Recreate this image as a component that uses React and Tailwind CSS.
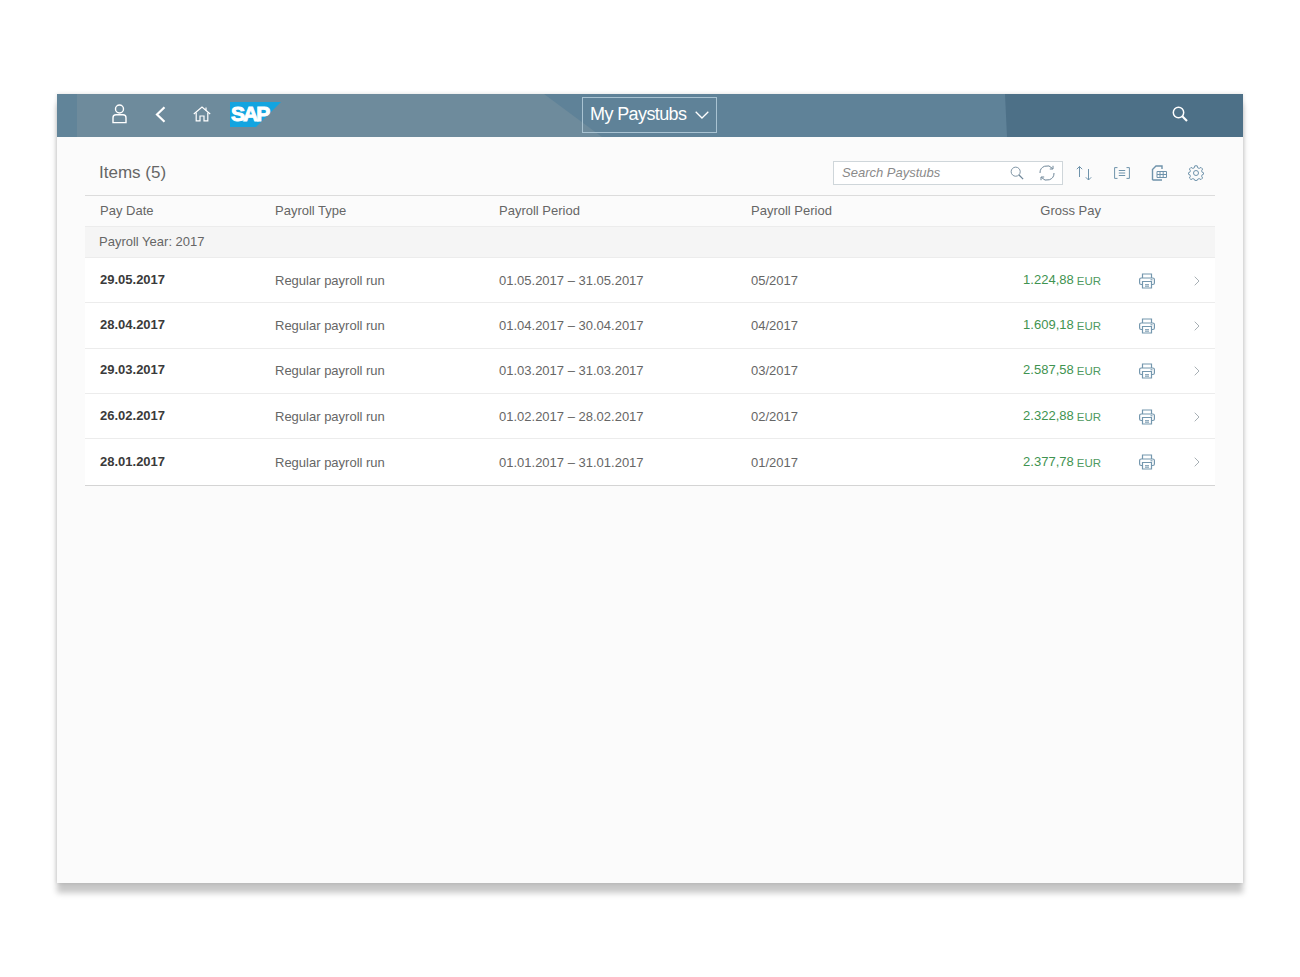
const rows = [
  ["29.05.2017", "01.05.2017 – 31.05.2017", "05/2017", "1.224,88"],
  ["28.04.2017", "01.04.2017 – 30.04.2017", "04/2017", "1.609,18"],
  ["29.03.2017", "01.03.2017 – 31.03.2017", "03/2017", "2.587,58"],
  ["26.02.2017", "01.02.2017 – 28.02.2017", "02/2017", "2.322,88"],
  ["28.01.2017", "01.01.2017 – 31.01.2017", "01/2017", "2.377,78"],
];

const gridCols = "grid grid-cols-[175px_224px_252px_150px_200px_92px_22px] pl-[15px] items-center";

function Svg({ w, h, children, className = "" }) {
  return (
    <svg width={w} height={h} viewBox={`0 0 ${w} ${h}`} fill="none" stroke="currentColor" className={className}>
      {children}
    </svg>
  );
}

function Printer() {
  return (
    <Svg w={16} h={16} className="text-[#7497ae]">
      <path d="M3.5 5V1H12.5V5" strokeWidth="1.2" />
      <path d="M3.5 11.5H2.2C1.2 11.5 .6 10.8 .6 10V6.6C.6 5.7 1.2 5 2.2 5H13.8C14.8 5 15.4 5.7 15.4 6.6V10C15.4 10.8 14.8 11.5 13.8 11.5H12.5" strokeWidth="1.2" />
      <path d="M3.5 8.5H12.5V15H3.5Z" strokeWidth="1.2" />
      <path d="M6 11.7H10M6 13.2H10" strokeWidth="1" />
      <path d="M11.5 6.8H13.5" strokeWidth="1.1" />
    </Svg>
  );
}

function Search({ className, s = 16, sw = 1.2 }) {
  return (
    <svg width={s} height={s} viewBox="0 0 16 16" fill="none" stroke="currentColor" strokeWidth={sw} className={className}>
      <circle cx="6.5" cy="6.5" r="5.2" />
      <path d="M10.3 10.3L15 15" strokeWidth={sw * 1.4} />
    </svg>
  );
}

function Row({ r, last }) {
  return (
    <div className={`${gridCols} ${last ? "h-[46.5px] border-[#d4d4d4]" : "h-[45.3px] border-[#ececec]"} pt-px bg-white border-b`}>
      <div className="font-bold text-[#3a3a3a] -translate-y-px">{r[0]}</div>
      <div>Regular payroll run</div>
      <div>{r[1]}</div>
      <div>{r[2]}</div>
      <div className="flex justify-end items-baseline text-[#3f9350]">
        <span className="-translate-y-px">{r[3]}</span>
        <span className="ml-[3px] text-[11.5px] text-[#4f9a62]">EUR</span>
      </div>
      <div className="flex justify-center"><Printer /></div>
      <div className="text-[#a8b0b5] pl-px">
        <Svg w={6} h={10}><path d="M.7 .7L5 5L.7 9.3" strokeWidth="1" /></Svg>
      </div>
    </div>
  );
}

export default function App() {
  return (
    <div className="min-h-[977px] bg-white pt-[94px] pl-[57px] font-['Liberation_Sans',Arial,sans-serif] text-[13px] text-[#666666]">
      <div className="w-[1186px] h-[789px] bg-[#fbfbfb] shadow-[0_10px_6px_0_rgba(0,0,0,0.22),0_0_4px_rgba(0,0,0,0.14)] flex flex-col">
        <header className="relative h-[43px] shrink-0 bg-[#5f8298] text-white overflow-hidden">
          <svg className="absolute inset-0" width="1186" height="43" viewBox="0 0 1186 43">
            <rect x="0" y="0" width="1186" height="43" fill="#5f8298" />
            <polygon points="20,0 487,0 545,43 20,43" fill="#6e8b9c" />
            <polygon points="0,0 20,0 20,43 0,43" fill="#618499" />
            <polygon points="948,0 1186,0 1186,43 950,43" fill="#4d7087" />
          </svg>
          <div className="relative flex items-center pl-[55px] w-full h-[40px]">
            <svg width="15" height="20" viewBox="0 0 15 20" fill="none" stroke="currentColor" strokeWidth="1.4">
              <circle cx="7.5" cy="5" r="4" />
              <path d="M1 18.6V13.8C1 12 2.3 10.8 4 10.8H11C12.7 10.8 14 12 14 13.8V18.6Z" />
            </svg>
            <svg className="ml-[28px]" width="11" height="17" viewBox="0 0 11 17" fill="none" stroke="currentColor" strokeWidth="2.2">
              <path d="M9.5 1.2L2 8.5L9.5 15.8" />
            </svg>
            <svg className="ml-[27px]" width="18" height="16" viewBox="0 0 18 16" fill="none" stroke="currentColor" strokeWidth="1.2">
              <path d="M.8 8L9 1L17.2 8" />
              <path d="M3.2 6.5V14.8H7V10H11V14.8H14.8V6.5" />
              <path d="M13 1.6V4.4" />
            </svg>
            <svg className="ml-[19px]" width="52" height="27" viewBox="0 0 52 27">
              <polygon points="0,1 51,1 26,26 0,26" fill="#13a4e0" />
              <text x="1" y="20" fill="#ffffff" fontSize="21" fontWeight="700" stroke="#ffffff" strokeWidth="1" letterSpacing="-2" fontFamily="Liberation Sans, Arial, sans-serif">SAP</text>
            </svg>
            <button className="ml-[300px] mt-[2px] pb-[2px] w-[135px] h-[36px] border border-[#a9c3d2] flex items-center pl-[7px] text-[18px] tracking-[-0.6px] text-white">
              My Paystubs
              <svg className="ml-[9px] mt-[2px]" width="14" height="8" viewBox="0 0 14 8" fill="none" stroke="currentColor" strokeWidth="1.3">
                <path d="M.7 .7L7 7L13.3 .7" />
              </svg>
            </button>
            <Search className="ml-[455px]" sw={1.5} />
          </div>
        </header>

        <div className="mx-[28px] flex flex-col">
          <div className="h-[59px] pt-[14px] flex items-center border-b border-[#dcdcdc] pl-[14px]">
            <div className="text-[17px] text-[#666666]">Items (5)</div>
            <div className="ml-auto flex items-center text-[#6f93ab]">
              <div className="w-[230px] h-[24px] bg-white border border-[#cfd6da] flex items-center pl-[8px] text-[#8a8a8a] text-[13px] italic">
                <span>Search Paystubs</span>
                <Search className="ml-auto text-[#6e8698] -translate-x-px" s={14} sw={1} />
                <svg className="ml-[14px] mr-[7px]" width="16" height="16" viewBox="0 0 16 16" fill="none" stroke="#6e8698" strokeWidth="1">
                  <path d="M1 8A7 7 0 0 1 13.5 3.5M15 8A7 7 0 0 1 2.5 12.5" />
                  <path d="M14 .8V4H10.8M2 15.2V12H5.2" />
                </svg>
              </div>
              <svg className="ml-[13px]" width="16" height="16" viewBox="0 0 16 16" fill="none" stroke="currentColor" strokeWidth="1">
                <path d="M3.5 12V1.5M.8 4.2L3.5 1.5L6.2 4.2" />
                <path d="M12.5 4V15M9.8 12.3L12.5 15L15.2 12.3" />
              </svg>
              <svg className="ml-[22px]" width="16" height="12" viewBox="0 0 16 12" fill="none" stroke="currentColor" strokeWidth="1">
                <path d="M3.5 .6H.6V11.4H3.5M12.5 .6H15.4V11.4H12.5" />
                <path d="M4.8 3.5H11.2M4.8 6H11.2M4.8 8.5H11.2" />
              </svg>
              <svg className="ml-[21px]" width="16" height="16" viewBox="0 0 16 16" fill="none" stroke="currentColor" strokeWidth="1">
                <path d="M1.5 15V4.5L5 1H11V4M1.5 15H11" strokeWidth="1.4" />
                <path d="M6 6.5H15.5V12.5H6ZM6 9.5H15.5M9 6.5V12.5M12.2 6.5V12.5" />
              </svg>
              <svg className="ml-[21px] mr-[11px]" width="16" height="16" viewBox="0 0 16 16" fill="none" stroke="currentColor" strokeWidth="1">
                <circle cx="8" cy="8" r="2.5" />
                <path d="M6.8 .8H9.2L9.7 2.8L11.2 3.4L13 2.4L14.6 4L13.6 5.8L14.2 7.3L15.6 7.8V9.2L14.2 9.7L13.6 11.2L14.6 13L13 14.6L11.2 13.6L9.7 14.2L9.2 15.4H6.8L6.3 14.2L4.8 13.6L3 14.6L1.4 13L2.4 11.2L1.8 9.7L.4 9.2V7.8L1.8 7.3L2.4 5.8L1.4 4L3 2.4L4.8 3.4L6.3 2.8Z" />
              </svg>
            </div>
          </div>

          <div className={`${gridCols} h-[31px] border-b border-[#ececec]`}>
            <div>Pay Date</div>
            <div>Payroll Type</div>
            <div>Payroll Period</div>
            <div>Payroll Period</div>
            <div className="text-right">Gross Pay</div>
          </div>
          <div className="h-[31px] bg-[#f5f5f5] border-b border-[#ececec] flex items-center pl-[14px]">Payroll Year: 2017</div>
          {rows.map((r, i) => <Row key={r[0]} r={r} last={i === rows.length - 1} />)}
        </div>
      </div>
    </div>
  );
}
